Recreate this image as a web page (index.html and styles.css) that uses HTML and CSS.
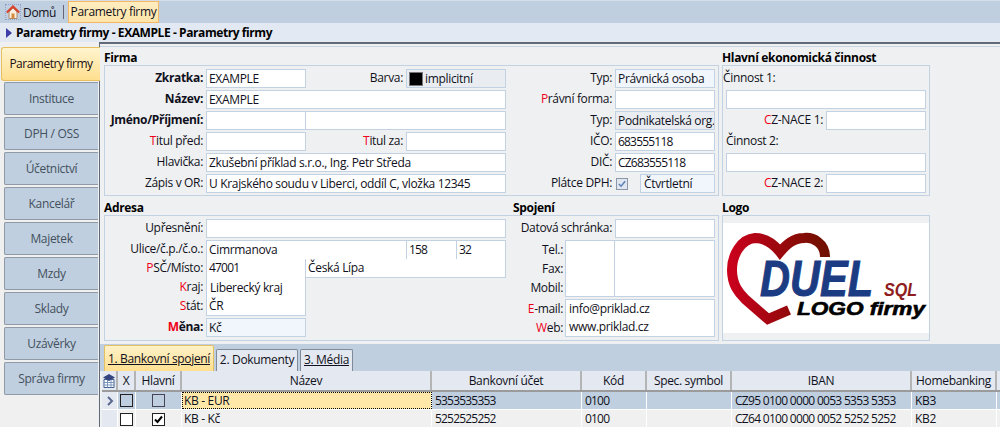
FILE: index.html
```html
<!DOCTYPE html>
<html lang="cs">
<head>
<meta charset="utf-8">
<title>Parametry firmy</title>
<link rel="stylesheet" href="styles.css">
</head>
<body>
<div class="topbar">
  <div class="home">
    <span class="home-box"><svg viewBox="0 0 14 14" width="14" height="14"><path d="M3 7v6.500h8V7L7 3z" fill="#fbeee0" stroke="#b08a6a"/><path d="M.8 7.500 7 1.500l6.200 6" fill="none" stroke="#d9432c" stroke-width="2"/><rect x="5.500" y="8.500" width="3" height="5" fill="#d08a3c"/></svg></span>
    <span>Domů</span>
  </div>
  <div class="top-sep"></div>
  <div class="top-tab">Parametry firmy</div>
</div>
<div class="titlebar"><i class="tri"></i><b>Parametry firmy - EXAMPLE - Parametry firmy</b></div>
<div class="body">
  <nav class="side">
    <div class="nav active">Parametry firmy</div>
    <div class="nav">Instituce</div>
    <div class="nav">DPH / OSS</div>
    <div class="nav">Účetnictví</div>
    <div class="nav">Kancelář</div>
    <div class="nav">Majetek</div>
    <div class="nav">Mzdy</div>
    <div class="nav">Sklady</div>
    <div class="nav">Uzávěrky</div>
    <div class="nav">Správa firmy</div>
  </nav>
  <main class="main">
    <div class="sections first">
      <section class="sec w-firma">
        <h2>Firma</h2>
        <div class="box firma">
          <div class="col col-a">
            <div class="row"><label class="l l1"><b>Zkratka:</b></label><div class="f w100">EXAMPLE</div><label class="l l2">Barva:</label><div class="f w100 gray color"><i class="swatch"></i>implicitní</div></div>
            <div class="row gap"><label class="l l1"><b>Název:</b></label><div class="f w300">EXAMPLE</div></div>
            <div class="row gap"><label class="l l1"><b>Jméno/Příjmení:</b></label><div class="f w100"></div><div class="f w201 ml"></div></div>
            <div class="row gap"><label class="l l1"><em>T</em>itul před:</label><div class="f w100"></div><label class="l l2"><em>T</em>itul za:</label><div class="f w100"></div></div>
            <div class="row gap"><label class="l l1">Hlavička:</label><div class="f w300">Zkušební příklad s.r.o., Ing. Petr Středa</div></div>
            <div class="row gap"><label class="l l1">Zápis v OR:</label><div class="f w300">U Krajského soudu v Liberci, oddíl C, vložka 12345</div></div>
          </div>
          <div class="col col-b">
            <div class="row"><label class="l l3">Typ:</label><div class="f w100 pale">Právnická osoba</div></div>
            <div class="row gap"><label class="l l3"><em>P</em>rávní forma:</label><div class="f w100"></div></div>
            <div class="row gap"><label class="l l3">Typ:</label><div class="f w100 gray">Podnikatelská org.</div></div>
            <div class="row gap"><label class="l l3">IČO:</label><div class="f w100 num">683555118</div></div>
            <div class="row gap"><label class="l l3">DIČ:</label><div class="f w100 num">CZ683555118</div></div>
            <div class="row gap"><label class="l l3">Plátce DPH:</label><span class="chk"><svg viewBox="0 0 11 11" width="10" height="10"><path d="M2 5.500 4.500 8 9 2.500" fill="none" stroke="#5a7fb5" stroke-width="1.600"/></svg></span><div class="f w75 pale">Čtvrtletní</div></div>
          </div>
        </div>
      </section>
      <section class="sec w-hl">
        <h2>Hlavní ekonomická činnost</h2>
        <div class="box hl">
          <div class="row"><span class="plain">Činnost 1:</span></div>
          <div class="row gap ind"><div class="f w200"></div></div>
          <div class="row gap ind"><label class="l l4"><em>C</em>Z-NACE 1:</label><div class="f w100"></div></div>
          <div class="row gap ind"><span class="plain">Činnost 2:</span></div>
          <div class="row gap ind"><div class="f w200"></div></div>
          <div class="row gap ind"><label class="l l4"><em>C</em>Z-NACE 2:</label><div class="f w100"></div></div>
        </div>
      </section>
    </div>
    <div class="sections second">
      <div class="w-firma">
        <div class="heads"><h2 class="h-adr">Adresa</h2><h2>Spojení</h2></div>
        <div class="box adr">
          <div class="col col-c">
            <div class="row"><label class="l l1">Upřesnění:</label><div class="f w300"></div></div>
            <div class="row gap"><label class="l l1">Ulice/č.p./č.o.:</label><div class="f w200 nbb nbr">Cimrmanova</div><div class="f w50 nbb nbr num">158</div><div class="f w50 nbb num">32</div></div>
            <div class="row"><label class="l l1"><em>P</em>SČ/Místo:</label><div class="f w99 nbt nbb nbr num">47001</div><div class="f w201 nbt">Česká Lípa</div></div>
            <div class="row"><label class="l l1"><em>K</em>raj:</label><div class="f w100 nbt nbb kraj">Liberecký kraj</div></div>
            <div class="row"><label class="l l1"><em>S</em>tát:</label><div class="f w100 nbt">ČR</div></div>
            <div class="row gap"><label class="l l1"><b><em>M</em>ěna:</b></label><div class="f w100 pale">Kč</div></div>
          </div>
          <div class="col col-d">
            <div class="row"><label class="l l5">Datová schránka:</label><div class="f w100"></div></div>
            <div class="stack gap s-tel">
              <div class="labels"><label class="l">Tel.:</label><label class="l">Fax:</label><label class="l">Mobil:</label></div>
              <div class="f block"><div class="tel-a"></div></div>
            </div>
            <div class="stack gap s-mail">
              <div class="labels"><label class="l"><em>E</em>-mail:</label><label class="l"><em>W</em>eb:</label></div>
              <div class="f block mail"><div>info@priklad.cz</div><div>www.priklad.cz</div></div>
            </div>
          </div>
        </div>
      </div>
      <section class="sec w-hl">
        <h2>Logo</h2>
        <div class="box logo">
          <svg class="logo-svg" viewBox="0 0 206 110" width="206" height="110">
            <defs><linearGradient id="hg" x1="0" x2="1" y1="0" y2="0"><stop offset="0" stop-color="#c8001c"/><stop offset="1" stop-color="#701000"/></linearGradient></defs>
            <rect width="206" height="110" fill="#fff"/>
            <path d="M102 34C102 20 90 14 81 15 70 15 63 22 57 29 50 20 42 15 32 15 18 16 9 32 9 47 9 62 16 70 22 76L45 96 66 87" fill="none" stroke="url(#hg)" stroke-width="10"/>
            <text x="37" y="73" class="duel" textLength="113" lengthAdjust="spacingAndGlyphs">DUEL</text>
            <text x="161" y="73" class="sql" textLength="33" lengthAdjust="spacingAndGlyphs">SQL</text>
            <text x="74" y="92" class="lf" textLength="128" lengthAdjust="spacingAndGlyphs">LOGO firmy</text>
          </svg>
        </div>
      </section>
    </div>
    <div class="tabs">
      <div class="tab on"><u>1. Bankovní spojení</u></div>
      <div class="tab t2">2. Dokumenty</div>
      <div class="tab t3"><u>3. Média</u></div>
    </div>
    <div class="grid">
      <div class="g-row head">
        <div class="c c0"><svg viewBox="0 0 12 14" width="12" height="14"><path d="M1 5.500h10v8H1z" fill="#fff" stroke="#3f5f90"/><path d="M1 8.500h10M1 11h10M4.500 5.500v8M8 5.500v8" stroke="#7a94c0" fill="none"/><path d="M0 3.500 6 0l6 3.500L6 7z" fill="#34447f"/></svg></div>
        <div class="c c1">X</div><div class="c c2">Hlavní</div><div class="c c3">Název</div><div class="c c4">Bankovní účet</div><div class="c c5">Kód</div><div class="c c6">Spec. symbol</div><div class="c c7">IBAN</div><div class="c c8">Homebanking</div>
      </div>
      <div class="g-row sel">
        <div class="c c0"><svg viewBox="0 0 8 10" width="8" height="10"><path d="M2 1l4 4-4 4" fill="none" stroke="#59698e" stroke-width="2"/></svg></div>
        <div class="c c1"><i class="cb"></i></div><div class="c c2"><i class="cb dim"></i></div><div class="c c3 cur">KB - EUR</div><div class="c c4 num">5353535353</div><div class="c c5 num">0100</div><div class="c c6"></div><div class="c c7 iban">CZ95 0100 0000 0053 5353 5353</div><div class="c c8">KB3</div>
      </div>
      <div class="g-row">
        <div class="c c0"></div>
        <div class="c c1"><i class="cb wh"></i></div><div class="c c2"><i class="cb wh"><svg viewBox="0 0 11 11" width="11" height="11"><path d="M2 5.500 4.500 8 9 2.500" fill="none" stroke="#000" stroke-width="2"/></svg></i></div><div class="c c3">KB - Kč</div><div class="c c4 num">5252525252</div><div class="c c5 num">0100</div><div class="c c6"></div><div class="c c7 iban">CZ64 0100 0000 0052 5252 5252</div><div class="c c8">KB2</div>
      </div>
    </div>
  </main>
</div>
</body>
</html>
```
FILE: styles.css
```css
*{box-sizing:border-box}
html,body{margin:0;padding:0;height:427px;overflow:hidden}
body{font:12px/17px "Open Sans","Noto Sans",sans-serif;color:#101020;background:#f0f0f0;letter-spacing:-.33px;white-space:nowrap}
h2{margin:0;font-size:12px;line-height:15px;font-weight:700;color:#000}
b{font-weight:700}
em{font-style:normal;color:#f00018}
.num{letter-spacing:-.8px}
.iban{letter-spacing:-.7px}

.topbar{height:23px;background:#bfcfdf;border-top:1px solid #d4dde8;display:flex;align-items:flex-start}
.home{display:flex;align-items:center;height:22px;padding-left:5px;gap:2px;width:56px;flex:none}
.home-box{width:16px;height:16px;border:1px dotted #8ea4cf;display:block;flex:none}
.home-box svg{display:block;margin:0}
.top-sep{width:1px;height:14px;background:#667;margin:4px 4px 0 7px}
.top-tab{width:91px;height:22px;background:linear-gradient(#ffedc0,#ffe4a8);border:1px solid #f5b765;text-align:center;line-height:20px}
.titlebar{height:19px;background:#e3e9f2;display:flex;align-items:center;padding-left:6px;gap:4px;color:#000;letter-spacing:-.42px}
.tri{width:0;height:0;border-left:6px solid #3d3da8;border-top:5px solid transparent;border-bottom:5px solid transparent}

.body{display:flex;height:385px}
.side{width:99px;padding-top:5px;background:#f0f0f0;flex:none;position:relative;z-index:1}
.nav{width:94px;height:33px;margin:0 0 2px 4px;background:#bfcfdf;border:1px solid #8f9aa6;border-right:0;border-radius:2px 0 0 2px;text-align:center;line-height:31px;color:#44505e}
.active{width:99px;height:34px;margin:0 0 1px 1px;border:1px solid #e6c060;border-right:0;background:linear-gradient(#fff4cf,#ffdf8f);color:#201010;line-height:32px;border-radius:3px 0 0 3px;letter-spacing:-.5px}

.main{flex:1;border-left:1px solid #606a76;border-top:2px solid #5f6a76;background:#eff0f2;padding:2px 0 0 4px;min-width:0}
.sections{display:flex;gap:3px}
.first{margin-left:-4px;padding:3px 0 0 4px;border-top:1px solid #c6d4e4}
.second{padding-top:4px}
.w-firma{width:615px;flex:none}
.w-hl{width:208px;flex:none}
.box{border:1px solid #c2d2e2}
.firma{display:flex;height:131px;padding-top:3px}
.hl{height:131px;padding-top:3px}
.adr{display:flex;height:126px;padding-top:3px}
.logo{height:126px;padding-top:7px}
.logo-svg{display:block}
.heads{display:flex}
.h-adr{width:409px}

.col{flex:none}
.col-a{width:401px}
.col-c{width:406px}
.row{display:flex;height:19px;align-items:flex-start}
.gap{margin-top:2px}
.l{display:block;text-align:right;padding-right:3px;line-height:18px;flex:none}
.l1{width:101px}
.l2{width:100px}
.l3{width:109px}
.l4{width:100px}
.l5{width:104px}
.f{height:19px;border:1px solid #c2d2e2;background:#fff;padding-left:2px;line-height:17px;flex:none;overflow:hidden}
.w99{width:99px}
.w100{width:100px}
.w200{width:200px}
.w50{width:50px}
.w300{width:300px}
.w201{width:201px}
.w75{width:75px;padding-left:3px}
.ml{margin-left:-1px}
.gray{background:#e9edf2}
.pale{background:#f1f6fc}
.color{display:flex;align-items:center;gap:2px}
.swatch{width:14px;height:14px;background:#000;border:1px solid #777;display:block}
.chk{width:12px;height:12px;border:1px solid #8b97a6;background:#dfe6ef;margin:4px 12px 0 1px;display:block;flex:none}
.chk svg{display:block}
.plain{display:block;line-height:18px}
.ind{padding-left:3px}
.nbb{border-bottom:0}
.nbt{border-top:0}
.nbr{border-right:0}
.kraj{padding-left:3px;padding-top:1px}
.stack{display:flex}
.s-tel{height:57px}
.s-mail{height:38px}
.labels{width:54px;flex:none}
.labels .l{height:19px;line-height:19px;padding-right:2px}
.block{width:150px;height:auto;padding-left:0}
.tel-a{width:49px;height:55px;border-right:1px solid #c2d2e2}
.mail{padding-left:3px;line-height:18px}

.duel{font:italic 700 50px "Liberation Sans",sans-serif;fill:#1b3b82;stroke:#1b3b82;stroke-width:1;letter-spacing:0}
.sql{font:italic 700 18px "Liberation Sans",sans-serif;fill:#8e1c20;letter-spacing:0}
.lf{font:italic 700 18px "Liberation Sans",sans-serif;fill:#000;stroke:#000;stroke-width:.6;letter-spacing:0}

.tabs{margin:3px 0 0 -4px;height:27px;background:#bfcfdf;display:flex;align-items:flex-end;gap:2px;padding-left:4px}
.tab{height:22px;background:#e4e9f1;border:1px solid #7f8b98;border-bottom:0;border-radius:2px 2px 0 0;line-height:20px;text-align:center}
.tab.on{height:26px;width:110px;background:linear-gradient(#fff2c8,#ffdf90);border-color:#e6c060;line-height:25px}
.t2{width:82px}
.t3{width:53px}

.grid{margin-left:-2px;background:#f0f0f0}
.g-row{display:flex;height:18px;background:#f0f0f0}
.head{height:21px;background:#e3e8f1;border-bottom:2px solid #9b9b9b}
.c{height:100%;border-right:1px solid #fff;padding-left:3px;line-height:17px;flex:none;overflow:hidden}
.head .c{border-right:2px solid #b4b4b4;text-align:center;padding:0;line-height:19px}
.sel{background:#bfcfdf;border-bottom:1px solid #fff}
.c0{width:16px;padding:0;display:flex;align-items:center;justify-content:center;background:#e3e8f1}
.head .c0{display:flex}
.c1{width:18px;padding:0;display:flex;align-items:center;justify-content:center}
.c2{width:46px;padding:0;display:flex;align-items:center;justify-content:center}
.c3{width:250px;padding-left:2px}
.c4{width:150px}
.c5{width:65px}
.c6{width:85px}
.c7{width:180px}
.c8{width:85px}
.head .c1,.head .c2{display:block}
.cb{width:13px;height:13px;border:1px solid #222;display:block}
.cb.dim{border-color:#445}
.cb.wh{background:#fff}
.cb svg{display:block}
.cur{background:#ffe8a8;outline:1px dotted #000;outline-offset:-1px}
```
